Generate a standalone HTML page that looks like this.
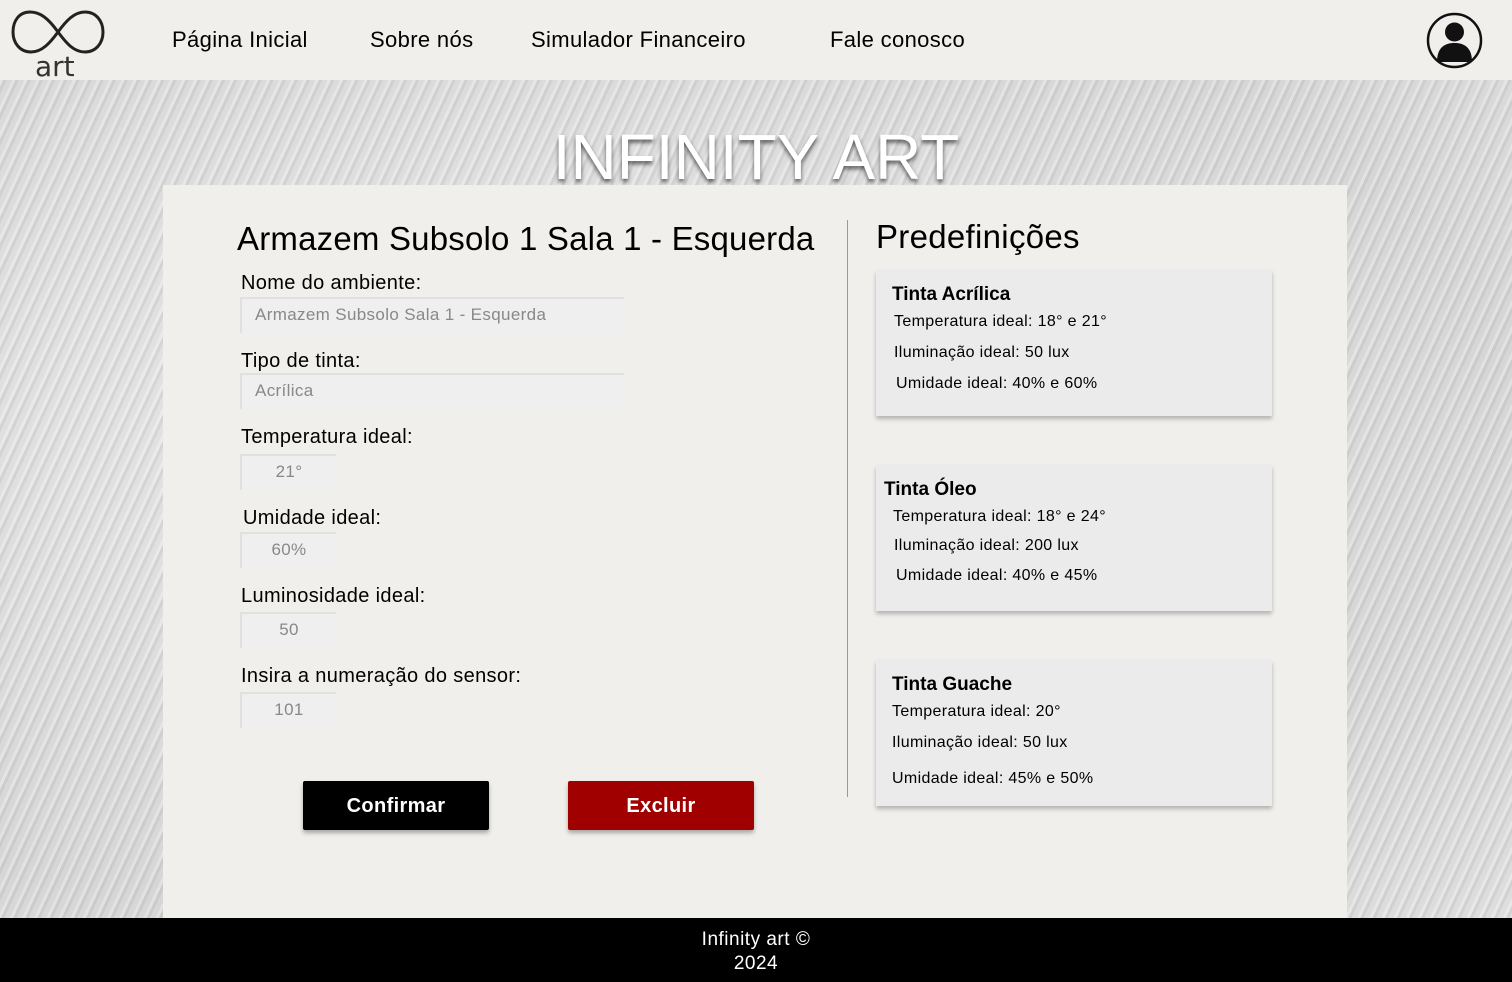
<!DOCTYPE html>
<html><head><meta charset="utf-8"><style>
*{margin:0;padding:0;box-sizing:border-box}
body{width:1512px;height:982px;overflow:hidden;font-family:"Liberation Sans",sans-serif;background:#f0efec;position:relative;color:#000;letter-spacing:.35px}
.hdr{position:absolute;left:0;top:0;width:1512px;height:80px;background:#f0efec}
.nav{position:absolute;top:27px;font-size:22px}
.bg{position:absolute;left:0;top:80px;width:1512px;height:838px;background:
repeating-linear-gradient(115deg,rgba(255,255,255,.35) 0 3px,rgba(180,180,180,.25) 3px 6px,rgba(230,230,230,.2) 6px 11px),
radial-gradient(ellipse at 30% 40%,#e6e6e6,#d2d2d2 70%,#dcdcdc)}
.title{position:absolute;top:120px;left:0;width:1512px;text-align:center;font-size:64px;color:#fff;letter-spacing:0;text-shadow:0 3px 4px rgba(0,0,0,.6)}
.card{position:absolute;left:163px;top:185px;width:1184px;height:733px;background:#f0efec}
.lbl{position:absolute;font-size:20px;margin-top:1px}
.inp{position:absolute;height:36px;background:#efefef;border-top:2px solid #e0e0e0;border-left:2px solid #e0e0e0;font-size:17px;color:#888;padding:6px 0 0 13px}
.sm{width:96px;text-align:center;padding-left:0}
.btn{position:absolute;top:781px;width:186px;height:49px;color:#fff;font-size:20px;font-weight:bold;text-align:center;line-height:51px;border-radius:2px;box-shadow:0 3px 4px rgba(0,0,0,.3)}
.pc{position:absolute;left:876px;width:396px;height:146px;background:#ebebeb;box-shadow:0 3px 4px rgba(0,0,0,.25)}
.pc div{position:absolute;font-size:16px;margin-top:1px}
.pc .h{font-size:19px;font-weight:bold;letter-spacing:0}
.ft{position:absolute;left:0;top:918px;width:1512px;height:64px;background:#000;color:#fff;text-align:center;font-size:19px;line-height:24px;padding-top:10px;letter-spacing:.5px}
</style></head><body>
<div class="hdr">
<svg style="position:absolute;left:10px;top:8px" width="96" height="48" viewBox="0 0 96 48"><path d="M48 24 C38 10 30 4 20 4 C9 4 3 13 3 24 C3 35 10 44 21 44 C32 44 40 35 48 24 C56 13 64 4 75 4 C86 4 93 13 93 24 C93 35 86 44 75 44 C64 44 57 36 48 24Z" fill="none" stroke="#222" stroke-width="3"/></svg>
<div style="position:absolute;left:35px;top:52px;font-size:28px;font-family:'DejaVu Sans',sans-serif;color:#333;line-height:30px;letter-spacing:0">art</div>
<div class="nav" style="left:172px">Página Inicial</div>
<div class="nav" style="left:370px">Sobre nós</div>
<div class="nav" style="left:531px">Simulador Financeiro</div>
<div class="nav" style="left:830px">Fale conosco</div>
<svg style="position:absolute;left:1426px;top:12px" width="57" height="57" viewBox="0 0 57 57"><circle cx="28.5" cy="28.5" r="26.5" fill="none" stroke="#111" stroke-width="2.5"/><circle cx="28.5" cy="20" r="9.5" fill="#111"/><path d="M11 50 C11 36 18 31 28.5 31 C39 31 46 36 46 50 Z" fill="#111"/></svg>
</div>
<div class="bg"></div>
<div class="title">INFINITY ART</div>
<div class="card"></div>
<div class="lbl" style="left:237px;top:219px;font-size:33px;letter-spacing:.2px">Armazem Subsolo 1 Sala 1 - Esquerda</div>
<div class="lbl" style="left:241px;top:271px">Nome do ambiente:</div>
<div class="inp" style="left:240px;top:297px;width:384px">Armazem Subsolo Sala 1 - Esquerda</div>
<div class="lbl" style="left:241px;top:349px">Tipo de tinta:</div>
<div class="inp" style="left:240px;top:373px;width:384px">Acrílica</div>
<div class="lbl" style="left:241px;top:425px">Temperatura ideal:</div>
<div class="inp sm" style="left:240px;top:454px">21°</div>
<div class="lbl" style="left:243px;top:506px">Umidade ideal:</div>
<div class="inp sm" style="left:240px;top:532px">60%</div>
<div class="lbl" style="left:241px;top:584px">Luminosidade ideal:</div>
<div class="inp sm" style="left:240px;top:612px">50</div>
<div class="lbl" style="left:241px;top:664px">Insira a numeração do sensor:</div>
<div class="inp sm" style="left:240px;top:692px">101</div>
<div class="btn" style="left:303px;background:#000">Confirmar</div>
<div class="btn" style="left:568px;background:#a10000">Excluir</div>
<div style="position:absolute;left:847px;top:220px;width:1px;height:577px;background:#999"></div>
<div class="lbl" style="left:876px;top:217px;font-size:33px;letter-spacing:.3px">Predefinições</div>
<div class="pc" style="top:270px"><div class="h" style="left:16px;top:13px">Tinta Acrílica</div><div style="left:18px;top:42px">Temperatura ideal: 18° e 21°</div><div style="left:18px;top:73px">Iluminação ideal: 50 lux</div><div style="left:20px;top:104px">Umidade ideal: 40% e 60%</div></div>
<div class="pc" style="top:465px"><div class="h" style="left:8px;top:13px">Tinta Óleo</div><div style="left:17px;top:42px">Temperatura ideal: 18° e 24°</div><div style="left:18px;top:71px">Iluminação ideal: 200 lux</div><div style="left:20px;top:101px">Umidade ideal: 40% e 45%</div></div>
<div class="pc" style="top:660px"><div class="h" style="left:16px;top:13px">Tinta Guache</div><div style="left:16px;top:42px">Temperatura ideal: 20°</div><div style="left:16px;top:73px">Iluminação ideal: 50 lux</div><div style="left:16px;top:109px">Umidade ideal: 45% e 50%</div></div>
<div class="ft">Infinity art ©<br>2024</div>
</body></html>
